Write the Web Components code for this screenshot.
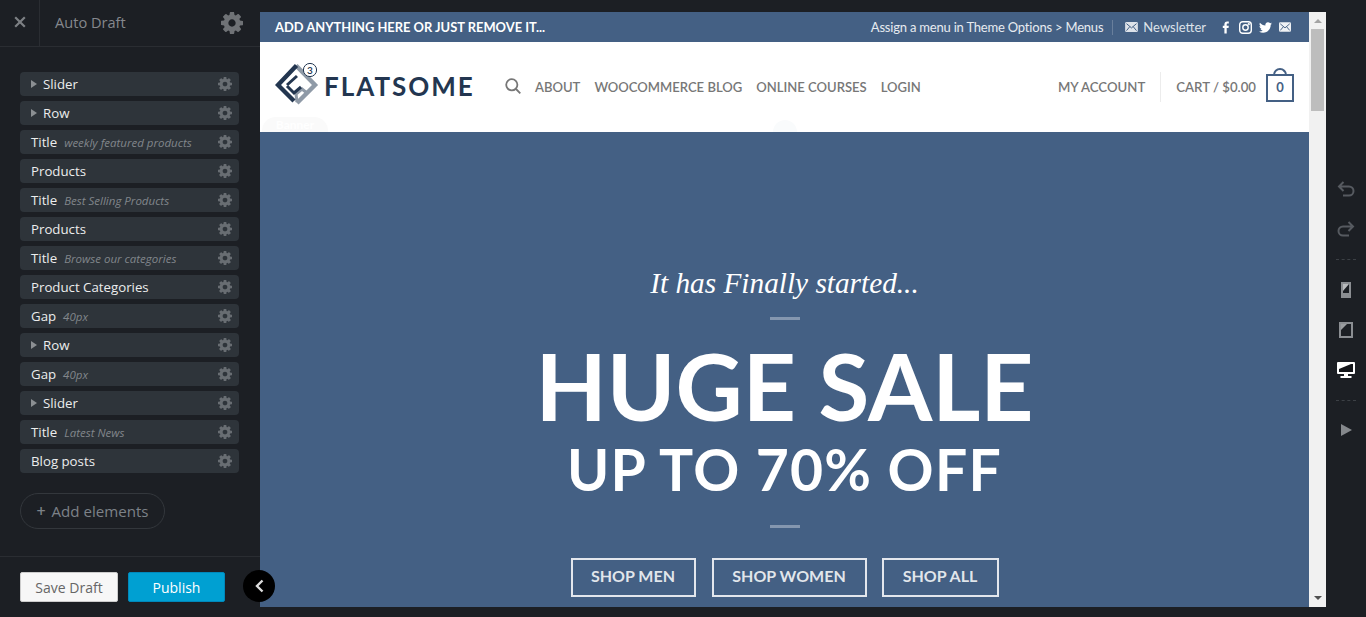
<!DOCTYPE html>
<html lang="en">
<head>
<meta charset="utf-8">
<title>Auto Draft</title>
<style>
  html, body { margin: 0; height: 100%; background: #1c1f24; overflow: hidden; }
  body { font-family: "Open Sans", "Liberation Sans", sans-serif; }
</style>
</head>
<body>
<ux-app>
  <ux-sidebar slot="sidebar" title="Auto Draft">
    <ux-item toggle>Slider</ux-item>
    <ux-item toggle>Row</ux-item>
    <ux-item hint="weekly featured products">Title</ux-item>
    <ux-item>Products</ux-item>
    <ux-item hint="Best Selling Products">Title</ux-item>
    <ux-item>Products</ux-item>
    <ux-item hint="Browse our categories">Title</ux-item>
    <ux-item>Product Categories</ux-item>
    <ux-item hint="40px">Gap</ux-item>
    <ux-item toggle>Row</ux-item>
    <ux-item hint="40px">Gap</ux-item>
    <ux-item toggle>Slider</ux-item>
    <ux-item hint="Latest News">Title</ux-item>
    <ux-item>Blog posts</ux-item>
  </ux-sidebar>
  <site-preview slot="preview"></site-preview>
  <ux-tools slot="tools"></ux-tools>
</ux-app>

<script>
const GEAR = 'M1152 896q0-106-75-181t-181-75-181 75-75 181 75 181 181 75 181-75 75-181zm512-109v222q0 12-8 23t-20 13l-185 28q-19 54-39 91 35 50 107 138 10 12 10 25t-9 23q-27 37-99 108t-94 71q-12 0-26-9l-138-108q-44 23-91 38-16 136-29 186-7 28-36 28h-222q-14 0-24.5-8.5t-11.5-21.5l-28-184q-49-16-90-37l-141 107q-10 9-25 9-14 0-25-11-126-114-165-168-7-10-7-23 0-12 8-23 15-21 51-66.5t54-70.5q-27-50-41-99l-183-27q-13-2-21-12.5t-8-23.5v-222q0-12 8-23t19-13l186-28q14-46 39-92-40-57-107-138-10-12-10-24 0-10 9-23 26-36 98.5-107.5t94.5-71.5q13 0 26 10l138 107q44-23 91-38 16-136 29-186 7-28 36-28h222q14 0 24.5 8.5t11.5 21.5l28 184q49 16 90 37l142-107q9-9 24-9 13 0 25 10 129 119 165 170 7 8 7 22 0 12-8 23-15 21-51 66.5t-54 70.5q26 50 41 98l183 28q13 2 21 12.5t8 23.5z'
const gearSvg = (size, color) => `<svg width="${size}" height="${size}" viewBox="128 128 1536 1536" fill="${color}" style="display:block"><path d="${GEAR}"/></svg>`
const mailSvg = (w, h, color) => `<svg width="${w}" height="${h}" viewBox="0 0 14 11" style="display:block"><rect width="14" height="11" rx="1.5" fill="${color}"/><path d="M1.500 1.800 7 6.500 12.500 1.800M1.500 9.500 5.200 5M12.500 9.500 8.800 5" fill="none" stroke="#446084" stroke-width="1.1"/></svg>`

class UxApp extends HTMLElement {
  constructor() {
    super()
    this.attachShadow({ mode: 'open' }).innerHTML = `
      <style>
        :host { display: grid; grid-template-columns: 260px 1fr 40px; height: 617px; }
        .middle { padding: 12px 0 10px; min-width: 0; min-height: 0; display: flex; }
      </style>
      <slot name="sidebar"></slot>
      <div class="middle"><slot name="preview"></slot></div>
      <slot name="tools"></slot>
    `
  }
}

class UxSidebar extends HTMLElement {
  constructor() {
    super()
    this.attachShadow({ mode: 'open' }).innerHTML = `
      <style>
        :host { display: flex; flex-direction: column; height: 617px; position: relative; z-index: 2; color: #8b8f94; }
        header { display: flex; align-items: center; height: 46px; border-bottom: 1px solid #2a2d32; }
        .close { width: 39px; height: 46px; display: flex; align-items: center; justify-content: center; border-right: 1px solid #2a2d32; }
        .close svg { margin-bottom: 2px; }
        h1 { flex: 1; margin: 0 0 2px 15px; font-size: 14.6px; font-weight: 400; color: #85888d; }
        .cog { margin: 0 17px 1px 0; }
        .list { display: flex; flex-direction: column; gap: 5px; padding: 25px 21px 0 20px; }
        .add { align-self: flex-start; margin: 20px 0 0 20px; box-sizing: border-box; width: 145px; height: 36px; border: 1px solid #33373c; border-radius: 18px; display: flex; align-items: center; justify-content: center; gap: 6px; font-size: 15.1px; color: #7c8288; }
        .add b { font-weight: 600; font-size: 16px; }
        footer { margin-top: auto; height: 61px; border-top: 1px solid #2a2d32; display: flex; gap: 10px; padding: 15px 20px 0; box-sizing: border-box; }
        button { font: inherit; font-size: 14px; height: 30px; border-radius: 2px; padding: 0; cursor: pointer; }
        .save { width: 98px; background: #f7f7f7; border: 1px solid #ccc; color: #666; }
        .publish { width: 97px; background: #00a0d2; border: 1px solid #0088bb; color: #fff; }
        .collapse { position: absolute; left: 243px; top: 570px; width: 32px; height: 32px; border-radius: 50%; background: #000; display: flex; align-items: center; justify-content: center; }
      </style>
      <header>
        <div class="close"><svg width="12" height="12" viewBox="0 0 12 12"><path d="M1.200 1.200l9.600 9.600M10.800 1.200l-9.600 9.600" stroke="#7d8084" stroke-width="2.200" fill="none"/></svg></div>
        <h1>${this.getAttribute('title')}</h1>
        <div class="cog">${gearSvg(22, '#6f7276')}</div>
      </header>
      <div class="list"><slot></slot></div>
      <div class="add"><b>+</b><span>Add elements</span></div>
      <footer>
        <button class="save">Save Draft</button>
        <button class="publish">Publish</button>
      </footer>
      <div class="collapse"><svg width="9" height="14" viewBox="0 0 9 14"><path d="M7.500 1.500 2 7l5.500 5.500" fill="none" stroke="#ddd" stroke-width="2.400"/></svg></div>
    `
  }
}

class UxItem extends HTMLElement {
  constructor() {
    super()
    const hint = this.getAttribute('hint')
    const toggle = this.hasAttribute('toggle')
    this.attachShadow({ mode: 'open' }).innerHTML = `
      <style>
        :host { display: flex; align-items: center; box-sizing: border-box; height: 24px; padding: 0 7px 0 11px; background: #2e343a; border-radius: 4px; font-size: 13.25px; color: #eceded; }
        .arrow { width: 0; height: 0; border-left: 6px solid #8b8f93; border-top: 4px solid transparent; border-bottom: 4px solid transparent; margin-right: 6px; }
        .hint { margin-left: 7px; font-size: 11.5px; font-style: italic; color: #81868b; white-space: nowrap; }
        .cog { margin-left: auto; }
      </style>
      ${toggle ? '<span class="arrow"></span>' : ''}
      <slot></slot>
      ${hint ? `<span class="hint">${hint}</span>` : ''}
      <span class="cog">${gearSvg(14, '#686d72')}</span>
    `
  }
}

class SitePreview extends HTMLElement {
  constructor() {
    super()
    this.attachShadow({ mode: 'open' }).innerHTML = `
      <style>
        :host { display: grid; grid-template-columns: 1fr 17px; flex: 1; min-width: 0; height: 595px; overflow: hidden; background: #fff; }
        .page { min-width: 0; height: 595px; overflow: hidden; font-family: Lato, "Liberation Sans", sans-serif; }
      </style>
      <div class="page">
        <site-topbar></site-topbar>
        <site-header></site-header>
        <site-hero></site-hero>
      </div>
      <fake-scrollbar></fake-scrollbar>
    `
  }
}

class SiteTopbar extends HTMLElement {
  constructor() {
    super()
    this.attachShadow({ mode: 'open' }).innerHTML = `
      <style>
        :host { display: flex; align-items: center; height: 30px; padding: 0 18px 0 15px; background: #446084; color: #fff; font-size: 13px; }
        .lead { font-weight: 700; font-size: 12.9px; }
        .right { margin-left: auto; display: flex; align-items: center; }
        .menu { color: #e7ebf0; letter-spacing: -0.2px; }
        .sep { width: 1px; height: 15px; background: rgba(255,255,255,.2); margin: 0 12px 0 9px; }
        .news { display: flex; align-items: center; gap: 5px; color: #dde2e9; margin-right: 14px; }
        .social { display: flex; align-items: center; gap: 7px; }
      </style>
      <span class="lead">ADD ANYTHING HERE OR JUST REMOVE IT...</span>
      <div class="right">
        <span class="menu">Assign a menu in Theme Options &gt; Menus</span>
        <span class="sep"></span>
        <span class="news">${mailSvg(13, 10, '#dde2e9')}Newsletter</span>
        <span class="social">
          <svg width="12" height="13" viewBox="0 0 12 13"><path d="M8.800.5H7.200C5.400.5 4.400 1.600 4.400 3.400v1.400H2.800v2.300h1.600v5.400h2.300V7.100h1.800l.3-2.300H6.700V3.600c0-.7.2-1 1-1h1.100z" fill="#fff"/></svg>
          <svg width="13" height="13" viewBox="0 0 13 13" fill="none" stroke="#fff" stroke-width="1.400"><rect x=".7" y=".7" width="11.600" height="11.600" rx="3"/><circle cx="6.500" cy="6.500" r="2.700"/><circle cx="9.800" cy="3.200" r=".4"/></svg>
          <svg width="13" height="13" viewBox="0 0 24 24" fill="#fff"><path d="M24 4.557c-.883.392-1.832.656-2.828.775 1.017-.609 1.798-1.574 2.165-2.724-.951.564-2.005.974-3.127 1.195-.897-.957-2.178-1.555-3.594-1.555-3.179 0-5.515 2.966-4.797 6.045-4.091-.205-7.719-2.165-10.148-5.144-1.29 2.213-.669 5.108 1.523 6.574-.806-.026-1.566-.247-2.229-.616-.054 2.281 1.581 4.415 3.949 4.89-.693.188-1.452.232-2.224.084.626 1.956 2.444 3.379 4.6 3.419-2.07 1.623-4.678 2.348-7.29 2.04 2.179 1.397 4.768 2.212 7.548 2.212 9.142 0 14.307-7.721 13.995-14.646.962-.695 1.797-1.562 2.457-2.549z"/></svg>
          ${mailSvg(12, 10, '#eef1f4')}
        </span>
      </div>
    `
  }
}

class SiteHeader extends HTMLElement {
  constructor() {
    super()
    this.attachShadow({ mode: 'open' }).innerHTML = `
      <style>
        :host { display: flex; align-items: center; position: relative; box-sizing: border-box; height: 90px; padding: 0 15px 2px; background: #fff; color: #777; font-size: 13.2px; font-weight: 600; }
        .logo { display: flex; align-items: center; gap: 3px; width: 215px; }
        .word { font-size: 26px; font-weight: 700; letter-spacing: 2px; color: #233650; line-height: 1; }
        nav { display: flex; align-items: center; gap: 14px; font-size: 13.05px; padding-top: 2px; }
        .right { margin-left: auto; display: flex; align-items: center; }
        .right .txt { padding-top: 2px; }
        .sep { width: 1px; height: 30px; background: #ececec; margin: 2px 15px 0 15px; }
        .bag { position: relative; margin-left: 10px; box-sizing: border-box; width: 28px; height: 28px; margin-top: 3px; border: 2px solid #446084; color: #446084; font-size: 13px; font-weight: 700; display: flex; align-items: center; justify-content: center; padding-bottom: 2px; }
        .bag::before { content: ""; position: absolute; left: 5px; top: -8px; width: 10px; height: 6px; border: 2px solid #446084; border-bottom: 0; border-radius: 7px 7px 0 0; }
        .pill { position: absolute; bottom: 0; left: 2px; width: 66px; height: 15px; border-radius: 14px 14px 0 0; background: #fafafa; color: #fff; font-size: 12px; font-weight: 700; text-align: center; overflow: hidden; line-height: 16px; }
        .dot { position: absolute; bottom: 0; left: 513px; width: 24px; height: 12px; border-radius: 12px 12px 0 0; background: #f9fbfc; }
      </style>
      <div class="logo">
        <svg width="46" height="46" viewBox="0 0 46 46" style="flex:none;margin-top:-2px">
          <path d="M21 3.500 40 23 22 41" fill="none" stroke="#8f9aa7" stroke-width="4.400"/>
          <path d="M22 40l-1-8 6-5 5 4" fill="none" stroke="#8f9aa7" stroke-width="3"/>
          <path d="M21.500 3.500 3 23 19 39" fill="none" stroke="#233650" stroke-width="4.400"/>
          <path d="M12 23l10-9M12 24l7 7 7-6" fill="none" stroke="#233650" stroke-width="3"/>
          <circle cx="35" cy="8" r="6.600" fill="#fff" stroke="#233650" stroke-width="1"/>
          <text x="35" y="11.600" text-anchor="middle" font-size="10" font-family="Lato, sans-serif" fill="#233650">3</text>
        </svg>
        <span class="word">FLATSOME</span>
      </div>
      <svg width="16" height="16" viewBox="0 0 16 16" style="flex:none;margin:0 14px 0 15px" fill="none" stroke="#777" stroke-width="1.800"><circle cx="6.800" cy="6.800" r="5.600"/><path d="M11 11l4.300 4.300"/></svg>
      <nav><span>ABOUT</span><span>WOOCOMMERCE BLOG</span><span>ONLINE COURSES</span><span>LOGIN</span></nav>
      <div class="right">
        <span class="txt">MY ACCOUNT</span>
        <span class="sep"></span>
        <span class="txt">CART / $0.00</span>
        <span class="bag">0</span>
      </div>
      <span class="pill">Banner</span>
      <span class="dot"></span>
    `
  }
}

class SiteHero extends HTMLElement {
  constructor() {
    super()
    this.attachShadow({ mode: 'open' }).innerHTML = `
      <style>
        :host { display: flex; flex-direction: column; align-items: center; height: 475px; overflow: hidden; background: #446084; color: #fff; padding-top: 130px; box-sizing: border-box; }
        .script { font-family: "Liberation Serif", serif; font-style: italic; font-size: 29.3px; line-height: 42px; }
        .rule { width: 30px; height: 3px; background: rgba(255,255,255,.35); flex: none; }
        .huge { font-size: 92.6px; font-weight: 700; line-height: 100px; margin-top: 16px; }
        .off { font-size: 57px; font-weight: 700; line-height: 66px; letter-spacing: 1.3px; }
        .r1 { margin-top: 13px; }
        .r2 { margin-top: 23px; }
        .btns { display: flex; gap: 16px; margin-top: 30px; }
        .btn { box-sizing: border-box; height: 39px; padding-bottom: 4px; border: 2px solid rgba(255,255,255,.85); display: flex; align-items: center; justify-content: center; font-size: 16px; font-weight: 700; color: rgba(255,255,255,.85); }
      </style>
      <div class="script">It has Finally started...</div>
      <div class="rule r1"></div>
      <div class="huge">HUGE SALE</div>
      <div class="off">UP TO 70% OFF</div>
      <div class="rule r2"></div>
      <div class="btns">
        <span class="btn" style="width:125px">SHOP MEN</span>
        <span class="btn" style="width:155px;margin-right:-1px">SHOP WOMEN</span>
        <span class="btn" style="width:117px">SHOP ALL</span>
      </div>
    `
  }
}

class FakeScrollbar extends HTMLElement {
  constructor() {
    super()
    this.attachShadow({ mode: 'open' }).innerHTML = `
      <style>
        :host { display: flex; flex-direction: column; align-items: center; height: 595px; background: #f1f1f1; }
        .up, .down { width: 0; height: 0; border-left: 4px solid transparent; border-right: 4px solid transparent; flex: none; }
        .up { border-bottom: 4px solid #a3a3a3; margin-top: 7px; }
        .down { border-top: 4px solid #505050; margin-top: auto; margin-bottom: 7px; }
        .thumb { width: 13px; height: 82px; background: #bdbdbd; margin-top: 6px; }
      </style>
      <span class="up"></span>
      <span class="thumb"></span>
      <span class="down"></span>
    `
  }
}

class UxTools extends HTMLElement {
  constructor() {
    super()
    this.attachShadow({ mode: 'open' }).innerHTML = `
      <style>
        :host { display: flex; flex-direction: column; align-items: center; padding-top: 169px; }
        .t { height: 40px; display: flex; align-items: center; justify-content: center; flex: none; }
        .dash { width: 20px; height: 0; margin: 10px 0; border-top: 1px dashed #3c4045; flex: none; }
        .dash.end { margin-bottom: 9px; }
      </style>
      <div class="t"><svg width="18" height="16" viewBox="0 0 18 16" fill="none" stroke="#565a60" stroke-width="2"><path d="M6.500 1 2 5.500 6.500 10M2 5.500h10a4.500 4.500 0 0 1 0 9H6"/></svg></div>
      <div class="t"><svg width="18" height="16" viewBox="0 0 18 16" fill="none" stroke="#565a60" stroke-width="2"><path d="M11.500 1 16 5.500 11.500 10M16 5.500H6a4.500 4.500 0 0 0 0 9h6"/></svg></div>
      <div class="dash"></div>
      <div class="t"><svg width="10" height="16" viewBox="0 0 10 16"><rect width="10" height="16" fill="#8b8e92"/><rect x="2" y="2" width="6" height="9" fill="#1c1f24"/><path d="M2 9 8 2H2z" fill="#b9bbbd"/></svg></div>
      <div class="t"><svg width="14" height="16" viewBox="0 0 14 16"><rect x="1" y="1" width="12" height="14" fill="#1c1f24" stroke="#8b8e92" stroke-width="2"/><path d="M2 8 8 2H2z" fill="#9a9da0"/></svg></div>
      <div class="t"><svg width="18" height="16" viewBox="0 0 18 16"><rect width="18" height="12" rx="1" fill="#fff"/><rect x="2" y="2" width="14" height="8" fill="#14161a"/><path d="M2 7 14 2H2z" fill="#fff"/><rect x="7" y="12" width="4" height="2" fill="#fff"/><rect x="3.500" y="14" width="11" height="2" fill="#fff"/></svg></div>
      <div class="dash end"></div>
      <div class="t"><svg width="11" height="12" viewBox="0 0 11 12"><path d="M0 0 11 6 0 12z" fill="#85888c"/></svg></div>
    `
  }
}

customElements.define('ux-app', UxApp)
customElements.define('ux-sidebar', UxSidebar)
customElements.define('ux-item', UxItem)
customElements.define('site-preview', SitePreview)
customElements.define('site-topbar', SiteTopbar)
customElements.define('site-header', SiteHeader)
customElements.define('site-hero', SiteHero)
customElements.define('fake-scrollbar', FakeScrollbar)
customElements.define('ux-tools', UxTools)
</script>
</body>
</html>
